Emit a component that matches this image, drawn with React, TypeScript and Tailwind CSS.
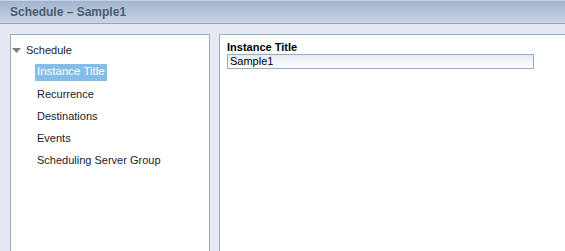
const items = ['Instance Title', 'Recurrence', 'Destinations', 'Events', 'Scheduling Server Group']

export default function App() {
  return (
    <div
      className="flex h-[251px] w-[565px] flex-col overflow-hidden bg-[#e4e9f4] text-[11px] text-[#1a1a2e]"
      style={{ fontFamily: '"Liberation Sans", Arial, sans-serif' }}
    >
      <div className="flex h-[24px] shrink-0 items-center border-t border-b border-t-[#c7d1e2] border-b-[#93a5c2] bg-gradient-to-b from-[#a3b4cf] to-[#cad5e5] pl-[10px]">
        <span className="text-[12px] font-bold text-[#4a5b74]">Schedule – Sample1</span>
      </div>

      <div className="flex flex-1 gap-[9px] pl-[10px] pt-[10px]">
        <div className="w-[200px] border border-b-0 border-[#9aabc8] bg-white pt-[4px]">
          <div className="flex h-[22px] items-center pl-[1px]">
            <svg width="9" height="5" viewBox="0 0 9 5" className="mr-[5px]">
              <polygon points="0,0 9,0 4.5,5" fill="#808080" />
            </svg>
            <span>Schedule</span>
          </div>
          {items.map((item, i) => (
            <div key={item} className="flex h-[22px] items-center pl-[24px]">
              <span
                className={
                  i === 0
                    ? 'flex h-[17px] items-center bg-[#86bde8] px-[2px] text-[11.5px] text-white'
                    : 'px-[2px]'
                }
              >
                {item}
              </span>
            </div>
          ))}
        </div>

        <div className="flex-1 border-t border-l border-[#9aabc8] bg-white pl-[7px] pt-[5px]">
          <div className="text-[11px] leading-[14px] font-bold text-black">Instance Title</div>
          <div className="flex h-[15px] w-[307px] items-center border border-[#9aabc8] bg-gradient-to-b from-[#e4ebf5] to-white pl-[2px] text-black">
            Sample1
          </div>
        </div>
      </div>
    </div>
  )
}
